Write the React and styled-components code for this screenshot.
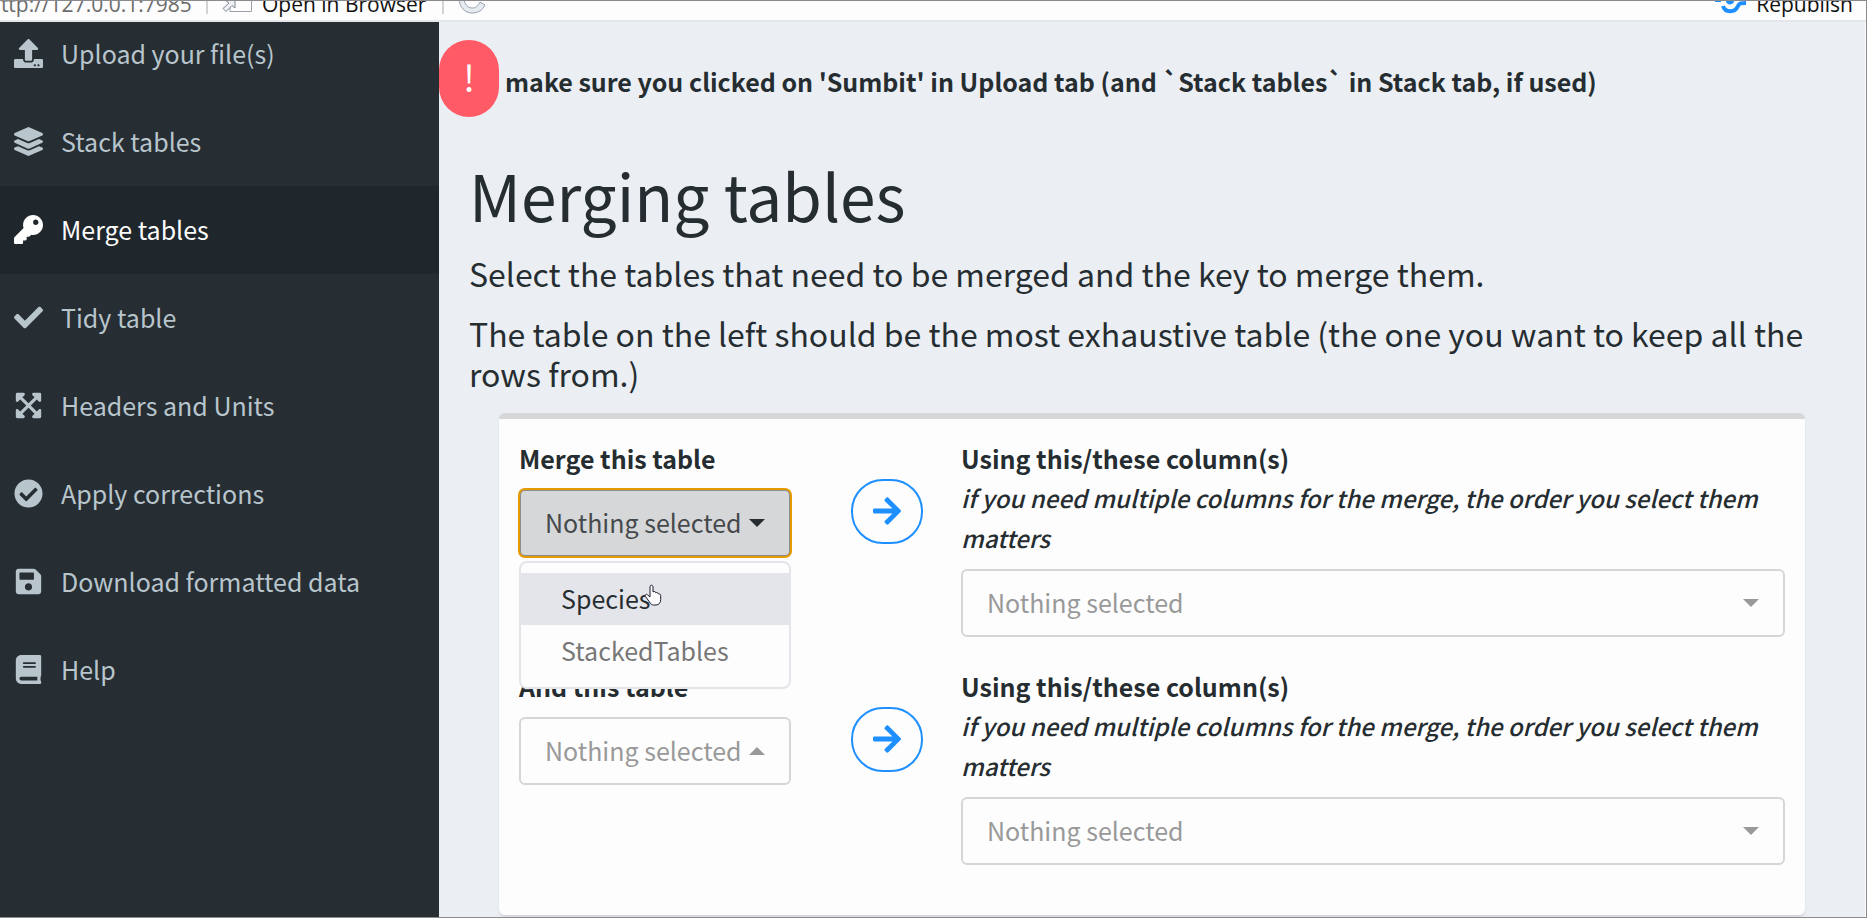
import React, { useState } from "react";
import styled, { createGlobalStyle, css } from "styled-components";
import {
  FaUpload,
  FaLayerGroup,
  FaKey,
  FaCheck,
  FaExpandArrowsAlt,
  FaCheckCircle,
  FaSave,
  FaBook,
  FaArrowRight,
} from "react-icons/fa";

const ink = "#262d31";
const blue = "#1e8fff";

const Global = createGlobalStyle`
  *, *::before, *::after { box-sizing: border-box; }
  body {
    margin: 0;
    font-family: "Noto Sans CJK JP", "Open Sans", sans-serif;
    font-size: 25px;
    line-height: 40px;
    color: ${ink};
    background: #ebeff4;
  }
  button, select { font: inherit; color: inherit; margin: 0; }
`;

const Window = styled.div`
  height: 100vh;
  min-height: 600px;
  display: flex;
  flex-direction: column;
  overflow: hidden;
  border: 1px solid #8b8b8d;
  border-left: 0;
`;

const Toolbar = styled.header`
  flex: none;
  height: 21px;
  display: flex;
  align-items: flex-end;
  justify-content: space-between;
  overflow: hidden;
  padding: 0 13px 2px 0;
  background: #fdfdfd;
  border-bottom: 2px solid #e4e6eb;
  font-family: "Open Sans", "Noto Sans", sans-serif;
  font-size: 21px;
  line-height: 28px;
`;

const ToolGroup = styled.div`
  display: flex;
  align-items: flex-end;
`;

const Address = styled.span`
  margin-left: -12px;
  width: 202px;
  color: #6c6c6c;
  white-space: nowrap;
`;

const Divider = styled.span`
  width: 2px;
  height: 14px;
  margin: 0 14px 4px 16px;
  background: #d2d3d5;
`;

const ToolButton = styled.button`
  display: flex;
  align-items: flex-end;
  gap: 9px;
  padding: 0;
  border: 0;
  background: none;
  color: #111;
  white-space: nowrap;
  svg { flex: none; margin-bottom: 4px; }
`;

const Body = styled.div`
  flex: 1;
  min-height: 0;
  display: flex;
`;

const Sidebar = styled.nav`
  flex: none;
  width: 439px;
  overflow: hidden;
  background: #262d33;
`;

const Menu = styled.ul`
  list-style: none;
  margin: -12px 0 0;
  padding: 0;
`;

const MenuLink = styled.a`
  display: flex;
  align-items: center;
  height: 88px;
  padding: 0 14px 2px;
  color: ${(p) => (p.$active ? "#fdfdfd" : "#b8c5cc")};
  background: ${(p) => (p.$active ? "#20272c" : "transparent")};
  text-decoration: none;
`;

const MenuIcon = styled.span`
  display: flex;
  width: 47px;
  svg { width: auto; height: 29px; }
`;

const Main = styled.main`
  flex: 1;
  min-width: 0;
  overflow: hidden;
  border-right: 1px solid #fdfdfd;
`;

const Notice = styled.div`
  display: flex;
  align-items: center;
  gap: 6px;
  margin-top: 18px;
  font-weight: 700;
`;

const Badge = styled.span`
  flex: none;
  width: 60px;
  height: 77px;
  border-radius: 30px;
  background: #ff5a66;
  color: #fdfdfd;
  font-size: 36px;
  font-weight: 400;
  line-height: 72px;
  text-align: center;
`;

const NoticeText = styled.span`
  padding-top: 4px;
`;

const Content = styled.section`
  padding: 0 30px;
`;

const Title = styled.h1`
  margin: 37px 0 19px;
  font-size: 64px;
  font-weight: 400;
  line-height: 80px;
`;

const Lead = styled.p`
  margin: 0 0 20px;
  font-size: 32px;
  line-height: 40px;
`;

const Card = styled.div`
  display: grid;
  grid-template-columns: 272px 170px minmax(0, 1fr);
  row-gap: 29px;
  align-items: start;
  margin: 0 30px;
  padding: 19px 20px 50px;
  border-top: 6px solid #d5d7d9;
  border-radius: 6px;
  background: #fdfdfd;
  box-shadow: 0 2px 2px rgba(0, 0, 0, 0.1);
`;

const Field = styled.div`
  position: relative;
  display: flex;
  flex-direction: column;
  gap: 11px;
`;

const Label = styled.label`
  font-weight: 700;
`;

const Hint = styled.em`
  display: block;
  font-size: 24px;
  font-weight: 500;
`;

const controlBox = css`
  width: 100%;
  height: 68px;
  padding: 0 24px 2px;
  border: 2px solid #d5d6d8;
  border-radius: 6px;
  background: #fdfdfd;
  color: #999;
  text-align: left;
`;

const SelectBox = styled.div`
  display: grid;
  align-items: center;
  > * { grid-area: 1 / 1; }
`;

const Select = styled.select`
  ${controlBox}
  appearance: none;
`;

const Caret = styled.span`
  justify-self: end;
  width: 16px;
  height: 8px;
  margin-right: 26px;
  background: ${(p) => p.$color || "#999"};
  clip-path: ${(p) =>
    p.$up ? "polygon(0 100%, 50% 0, 100% 100%)" : "polygon(0 0, 100% 0, 50% 100%)"};
  pointer-events: none;
`;

const Toggle = styled.button`
  ${controlBox}
  border-color: #8c8f92;
  background: #d6d7d9;
  color: #46494c;
  outline: 2px solid #e59a00;
  outline-offset: -1px;
`;

const Options = styled.ul`
  position: absolute;
  z-index: 2;
  top: 100%;
  left: 0;
  right: 0;
  margin: 4px 0 0;
  padding: 10px 0;
  list-style: none;
  border: 2px solid #e4e5ea;
  border-radius: 8px;
  background: #fdfdfd;
`;

const Option = styled.li`
  height: 52px;
  padding: 0 40px;
  line-height: 51px;
  color: ${(p) => (p.$hover ? ink : "#777")};
  background: ${(p) => (p.$hover ? "#e4e5ea" : "transparent")};
`;

const Pointer = styled.svg`
  position: absolute;
  top: 21px;
  left: 123px;
  width: 18px;
  height: 22px;
`;

const GoButton = styled.button`
  display: flex;
  align-items: center;
  justify-content: center;
  width: 72px;
  height: 65px;
  margin: 41px 0 0 60px;
  padding: 0 0 2px;
  border: 2px solid ${blue};
  border-radius: 32px;
  background: transparent;
  color: ${blue};
  svg { width: auto; height: 32px; }
`;

const menu = [
  { icon: FaUpload, text: "Upload your file(s)" },
  { icon: FaLayerGroup, text: "Stack tables" },
  { icon: FaKey, text: "Merge tables", active: true },
  { icon: FaCheck, text: "Tidy table" },
  { icon: FaExpandArrowsAlt, text: "Headers and Units" },
  { icon: FaCheckCircle, text: "Apply corrections" },
  { icon: FaSave, text: "Download formatted data" },
  { icon: FaBook, text: "Help" },
];

const tables = ["Species", "StackedTables"];

function TableSelect({ id, up, options = [] }) {
  return (
    <SelectBox>
      <Select id={id} defaultValue="">
        <option value="">Nothing selected</option>
        {options.map((t) => (
          <option key={t}>{t}</option>
        ))}
      </Select>
      <Caret $up={up} />
    </SelectBox>
  );
}

function ColumnField({ id }) {
  return (
    <Field>
      <Label htmlFor={id}>
        Using this/these column(s)
        <Hint>if you need multiple columns for the merge, the order you select them matters</Hint>
      </Label>
      <TableSelect id={id} />
    </Field>
  );
}

function OpenMenuField() {
  const [open, setOpen] = useState(true);
  return (
    <Field>
      <Label htmlFor="left-table">Merge this table</Label>
      <SelectBox>
        <Toggle
          id="left-table"
          type="button"
          aria-haspopup="listbox"
          aria-expanded={open}
          onClick={() => setOpen(!open)}
        >
          Nothing selected
        </Toggle>
        <Caret $color={ink} />
      </SelectBox>
      {open && (
        <Options role="listbox">
          {tables.map((t, i) => (
            <Option key={t} role="option" aria-selected={false} $hover={i === 0}>
              {t}
            </Option>
          ))}
          <Pointer viewBox="0 0 18 22" aria-hidden="true">
            <path
              d="M6 13V3c0-2.400 3-2.400 3 0v5c1-1 2.600-.6 2.800.8 1-.6 2.400 0 2.600 1.100 1.200-.4 2.300.4 2.300 1.600v4c0 3-1.700 5.500-4.700 5.500H9.500c-1.500 0-2.500-.8-3.300-2L1.500 12.500c-1-1.700.8-2.800 2-1.700z"
              fill="#fdfdfd"
              stroke="#1c1c2a"
              strokeWidth="1"
            />
          </Pointer>
        </Options>
      )}
    </Field>
  );
}

export default function App() {
  return (
    <Window>
      <Global />
      <Toolbar>
        <ToolGroup>
          <Address>http://127.0.0.1:7985</Address>
          <Divider />
          <ToolButton type="button">
            <svg width="31" height="14" viewBox="0 0 31 14" aria-hidden="true">
              <path d="M8 0V11.500H29.500V0" fill="#fdfdfd" stroke="#9aa0a8" />
              <path d="M3 0H13V8L10 5.500L4 11.500L1 8.500L7 3Z" fill="#eef1f6" stroke="#7d8793" />
            </svg>
            Open in Browser
          </ToolButton>
          <Divider />
          <ToolButton type="button" aria-label="Reload">
            <svg width="28" height="16" viewBox="0 0 28 16" aria-hidden="true">
              <path
                d="M1 0C1 9 7 15 14 15C20 15 25 12 27 7L22 4C20 8 18 10 14 10C10 10 6 6 6 0"
                fill="#e6ebf2"
                stroke="#98a2b0"
              />
            </svg>
          </ToolButton>
        </ToolGroup>
        <ToolButton type="button">
          <svg width="32" height="14" viewBox="0 0 32 14" aria-hidden="true">
            <path d="M0 0H6V2H0ZM11 0H19C20 6 10 6 11 0Z" fill={blue} />
            <path d="M8 6C10 13 20 13 23 6C24 3 26 3 31 3" fill="none" stroke={blue} strokeWidth="4" />
          </svg>
          Republish
        </ToolButton>
      </Toolbar>
      <Body>
        <Sidebar>
          <Menu>
            {menu.map(({ icon: Icon, text, active }) => (
              <li key={text}>
                <MenuLink href="#" $active={active}>
                  <MenuIcon>
                    <Icon />
                  </MenuIcon>
                  {text}
                </MenuLink>
              </li>
            ))}
          </Menu>
        </Sidebar>
        <Main>
          <Notice>
            <Badge>!</Badge>
            <NoticeText>
              make sure you clicked on 'Sumbit' in Upload tab (and `Stack tables` in Stack tab, if
              used)
            </NoticeText>
          </Notice>
          <Content>
            <Title>Merging tables</Title>
            <Lead>Select the tables that need to be merged and the key to merge them.</Lead>
            <Lead>
              The table on the left should be the most exhaustive table (the one you want to keep
              all the rows from.)
            </Lead>
            <Card>
              <OpenMenuField />
              <GoButton type="button" aria-label="Load columns of first table">
                <FaArrowRight />
              </GoButton>
              <ColumnField id="left-columns" />
              <Field>
                <Label htmlFor="right-table">And this table</Label>
                <TableSelect id="right-table" up options={tables} />
              </Field>
              <GoButton type="button" aria-label="Load columns of second table">
                <FaArrowRight />
              </GoButton>
              <ColumnField id="right-columns" />
            </Card>
          </Content>
        </Main>
      </Body>
    </Window>
  );
}
